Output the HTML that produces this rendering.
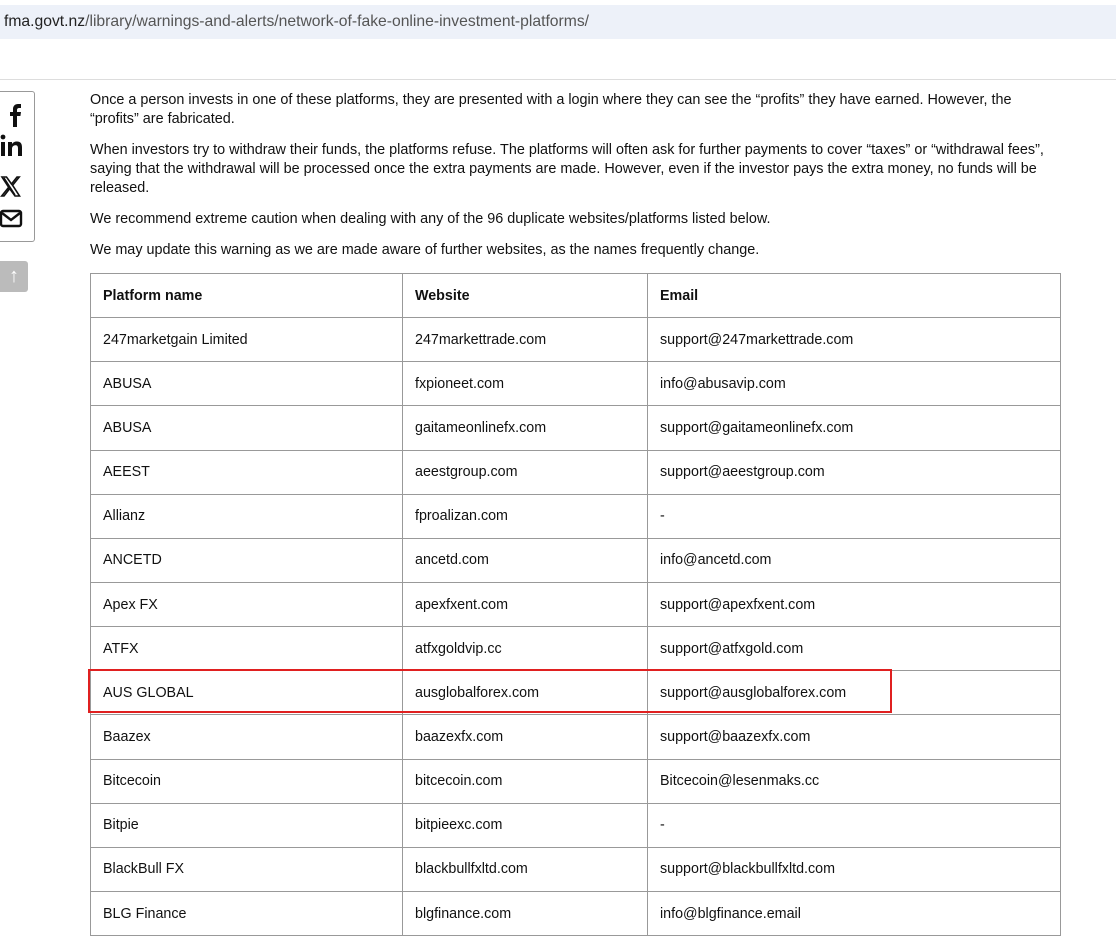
<!DOCTYPE html>
<html><head><meta charset="utf-8"><style>
*{margin:0;padding:0;box-sizing:border-box}
body{width:1116px;height:915px;overflow:hidden;background:#fff;font-family:"Liberation Sans",Arial,sans-serif;color:#111;position:relative}
.bar{position:absolute;left:0;top:5px;width:1116px;height:34px;background:#edf1f9;font-size:15.7px;color:#555;padding:8px 0 0 4px}
.bar b{font-weight:normal;color:#222}
.hr{position:absolute;left:0;top:79px;width:1116px;height:1px;background:#ddd}
.soc{position:absolute;left:-2px;top:91px;width:37px;height:151px;border:1px solid #999;border-left:none;border-radius:0 3px 3px 0}
.up{position:absolute;left:0;top:261px;width:28px;height:31px;background:#bbb;border-radius:0 3px 3px 0;color:#fff;font-size:20px;text-align:center;line-height:30px}
.txt{position:absolute;left:90px;top:91px;width:966px;font-size:14.4px;line-height:19px}
.txt p{margin-bottom:12px}
table{position:absolute;left:90px;top:273px;width:971px;border-collapse:collapse;font-size:14.3px}
td,th{border:1px solid #999;height:44.15px;padding:0 12px;text-align:left;vertical-align:middle}
th{font-weight:bold}
.red{position:absolute;left:88px;top:669px;width:804px;height:44px;border:2px solid #e02020}
</style></head><body>
<div class="bar"><b>fma.govt.nz</b>/library/warnings-and-alerts/network-of-fake-online-investment-platforms/</div>
<div class="hr"></div>
<div class="soc">
<svg width="36" height="150" viewBox="0 0 36 150">
<path d="M15 35V24h-3v-4h3v-3c0-3 2-5 5-5h3v4h-2c-1 0-2 .5-2 2v2h4l-.6 4H19v11z" fill="#111"/>
<rect x="3" y="50" width="4" height="14" fill="#111"/><circle cx="5" cy="45" r="2.4" fill="#111"/>
<path d="M10 50h4v2c1-1.5 2.5-2.5 5-2.5 4 0 5 2.5 5 6V64h-4v-7.5c0-2-.5-3.3-2.4-3.3S14 54.5 14 56.5V64h-4z" fill="#111"/>
<path d="M4 85h4.5l5 7 5.5-7h2.2l-6.6 8.3L21.5 104h-4.5l-5.3-7.4L6 104H3.7l7-8.7z M6 86l11 17" fill="none" stroke="#111" stroke-width="1.6"/>
<rect x="3" y="119" width="20" height="15" rx="2" fill="none" stroke="#111" stroke-width="2.4"/>
<path d="M4 121l9 7 9-7" fill="none" stroke="#111" stroke-width="2.4"/>
</svg></div>
<div class="up">↑</div>
<div class="txt">
<p>Once a person invests in one of these platforms, they are presented with a login where they can see the “profits” they have earned. However, the “profits” are fabricated.</p>
<p>When investors try to withdraw their funds, the platforms refuse. The platforms will often ask for further payments to cover “taxes” or “withdrawal fees”, saying that the withdrawal will be processed once the extra payments are made. However, even if the investor pays the extra money, no funds will be released.</p>
<p>We recommend extreme caution when dealing with any of the 96 duplicate websites/platforms listed below.</p>
<p>We may update this warning as we are made aware of further websites, as the names frequently change.</p>
</div>
<table>
<colgroup><col style="width:312px"><col style="width:245px"><col></colgroup>
<tr><th>Platform name</th><th>Website</th><th>Email</th></tr>
<tr><td>247marketgain Limited</td><td>247markettrade.com</td><td>support@247markettrade.com</td></tr>
<tr><td>ABUSA</td><td>fxpioneet.com</td><td>info@abusavip.com</td></tr>
<tr><td>ABUSA</td><td>gaitameonlinefx.com</td><td>support@gaitameonlinefx.com</td></tr>
<tr><td>AEEST</td><td>aeestgroup.com</td><td>support@aeestgroup.com</td></tr>
<tr><td>Allianz</td><td>fproalizan.com</td><td>-</td></tr>
<tr><td>ANCETD</td><td>ancetd.com</td><td>info@ancetd.com</td></tr>
<tr><td>Apex FX</td><td>apexfxent.com</td><td>support@apexfxent.com</td></tr>
<tr><td>ATFX</td><td>atfxgoldvip.cc</td><td>support@atfxgold.com</td></tr>
<tr><td>AUS GLOBAL</td><td>ausglobalforex.com</td><td>support@ausglobalforex.com</td></tr>
<tr><td>Baazex</td><td>baazexfx.com</td><td>support@baazexfx.com</td></tr>
<tr><td>Bitcecoin</td><td>bitcecoin.com</td><td>Bitcecoin@lesenmaks.cc</td></tr>
<tr><td>Bitpie</td><td>bitpieexc.com</td><td>-</td></tr>
<tr><td>BlackBull FX</td><td>blackbullfxltd.com</td><td>support@blackbullfxltd.com</td></tr>
<tr><td>BLG Finance</td><td>blgfinance.com</td><td>info@blgfinance.email</td></tr>
</table>
<div class="red"></div>
</body></html>
